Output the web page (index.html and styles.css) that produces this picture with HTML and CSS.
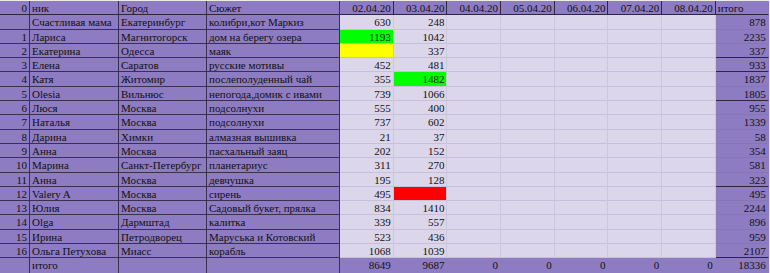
FILE: index.html
```html
<!DOCTYPE html>
<html lang="ru">
<head>
<meta charset="utf-8">
<link rel="stylesheet" href="styles.css">
</head>
<body>
<div class="sheet">
  <div class="c p r n hd">0</div><div class="c p hd">ник</div><div class="c p hd">Город</div><div class="c p hd">Сюжет</div>
  <div class="c p r hd dv">02.04.20</div><div class="c p r hd dv">03.04.20</div><div class="c p r hd dv">04.04.20</div><div class="c p r hd dv">05.04.20</div><div class="c p r hd dv">06.04.20</div><div class="c p r hd dv">07.04.20</div><div class="c p r hd dv">08.04.20</div><div class="c p hd tot">итого</div>

  <div class="c p r n"></div><div class="c p">Счастливая мама</div><div class="c p">Екатеринбург</div><div class="c p">колибри,кот Маркиз</div>
  <div class="c l r">630</div><div class="c l r">248</div><div class="c l"></div><div class="c l"></div><div class="c l"></div><div class="c l"></div><div class="c l"></div><div class="c p r tot">878</div>

  <div class="c p r n">1</div><div class="c p">Лариса</div><div class="c p">Магнитогорск</div><div class="c p">дом на берегу озера</div>
  <div class="c l r green">1193</div><div class="c l r">1042</div><div class="c l"></div><div class="c l"></div><div class="c l"></div><div class="c l"></div><div class="c l"></div><div class="c p r tot">2235</div>

  <div class="c p r n">2</div><div class="c p">Екатерина</div><div class="c p">Одесса</div><div class="c p">маяк</div>
  <div class="c l r yellow"></div><div class="c l r">337</div><div class="c l"></div><div class="c l"></div><div class="c l"></div><div class="c l"></div><div class="c l"></div><div class="c p r tot thick">337</div>

  <div class="c p r n">3</div><div class="c p">Елена</div><div class="c p">Саратов</div><div class="c p">русские мотивы</div>
  <div class="c l r">452</div><div class="c l r">481</div><div class="c l"></div><div class="c l"></div><div class="c l"></div><div class="c l"></div><div class="c l"></div><div class="c p r tot thick">933</div>

  <div class="c p r n">4</div><div class="c p">Катя</div><div class="c p">Житомир</div><div class="c p">послеполуденный чай</div>
  <div class="c l r">355</div><div class="c l r green">1482</div><div class="c l"></div><div class="c l"></div><div class="c l"></div><div class="c l"></div><div class="c l"></div><div class="c p r tot">1837</div>

  <div class="c p r n">5</div><div class="c p">Olesia</div><div class="c p">Вильнюс</div><div class="c p">непогода,домик с ивами</div>
  <div class="c l r">739</div><div class="c l r">1066</div><div class="c l"></div><div class="c l"></div><div class="c l"></div><div class="c l"></div><div class="c l"></div><div class="c p r tot thick">1805</div>

  <div class="c p r n">6</div><div class="c p">Люся</div><div class="c p">Москва</div><div class="c p">подсолнухи</div>
  <div class="c l r">555</div><div class="c l r">400</div><div class="c l"></div><div class="c l"></div><div class="c l"></div><div class="c l"></div><div class="c l"></div><div class="c p r tot">955</div>

  <div class="c p r n">7</div><div class="c p">Наталья</div><div class="c p">Москва</div><div class="c p">подсолнухи</div>
  <div class="c l r">737</div><div class="c l r">602</div><div class="c l"></div><div class="c l"></div><div class="c l"></div><div class="c l"></div><div class="c l"></div><div class="c p r tot">1339</div>

  <div class="c p r n">8</div><div class="c p">Дарина</div><div class="c p">Химки</div><div class="c p">алмазная вышивка</div>
  <div class="c l r">21</div><div class="c l r">37</div><div class="c l"></div><div class="c l"></div><div class="c l"></div><div class="c l"></div><div class="c l"></div><div class="c p r tot">58</div>

  <div class="c p r n">9</div><div class="c p">Анна</div><div class="c p">Москва</div><div class="c p">пасхальный заяц</div>
  <div class="c l r">202</div><div class="c l r">152</div><div class="c l"></div><div class="c l"></div><div class="c l"></div><div class="c l"></div><div class="c l"></div><div class="c p r tot">354</div>

  <div class="c p r n">10</div><div class="c p">Марина</div><div class="c p">Санкт-Петербург</div><div class="c p">планетариус</div>
  <div class="c l r">311</div><div class="c l r">270</div><div class="c l"></div><div class="c l"></div><div class="c l"></div><div class="c l"></div><div class="c l"></div><div class="c p r tot">581</div>

  <div class="c p r n">11</div><div class="c p">Анна</div><div class="c p">Москва</div><div class="c p">девчушка</div>
  <div class="c l r">195</div><div class="c l r">128</div><div class="c l"></div><div class="c l"></div><div class="c l"></div><div class="c l"></div><div class="c l"></div><div class="c p r tot thick">323</div>

  <div class="c p r n">12</div><div class="c p">Valery A</div><div class="c p">Москва</div><div class="c p">сирень</div>
  <div class="c l r">495</div><div class="c l r red"></div><div class="c l"></div><div class="c l"></div><div class="c l"></div><div class="c l"></div><div class="c l"></div><div class="c p r tot">495</div>

  <div class="c p r n">13</div><div class="c p">Юлия</div><div class="c p">Москва</div><div class="c p">Садовый букет, прялка</div>
  <div class="c l r">834</div><div class="c l r">1410</div><div class="c l"></div><div class="c l"></div><div class="c l"></div><div class="c l"></div><div class="c l"></div><div class="c p r tot">2244</div>

  <div class="c p r n">14</div><div class="c p">Olga</div><div class="c p">Дармштад</div><div class="c p">калитка</div>
  <div class="c l r">339</div><div class="c l r">557</div><div class="c l"></div><div class="c l"></div><div class="c l"></div><div class="c l"></div><div class="c l"></div><div class="c p r tot">896</div>

  <div class="c p r n">15</div><div class="c p">Ирина</div><div class="c p">Петродворец</div><div class="c p">Маруська и Котовский</div>
  <div class="c l r">523</div><div class="c l r">436</div><div class="c l"></div><div class="c l"></div><div class="c l"></div><div class="c l"></div><div class="c l"></div><div class="c p r tot">959</div>

  <div class="c p r n">16</div><div class="c p">Ольга Петухова</div><div class="c p">Миасс</div><div class="c p">корабль</div>
  <div class="c l r">1068</div><div class="c l r">1039</div><div class="c l"></div><div class="c l"></div><div class="c l"></div><div class="c l"></div><div class="c l"></div><div class="c p r tot thick">2107</div>

  <div class="c p r n last"></div><div class="c p last">итого</div><div class="c p last"></div><div class="c p last"></div>
  <div class="c p r last sum">8649</div><div class="c p r last sum">9687</div><div class="c p r last sum">0</div><div class="c p r last sum">0</div><div class="c p r last sum">0</div><div class="c p r last sum">0</div><div class="c p r last sum">0</div><div class="c p r last tot">18336</div>
</div>
</body>
</html>
```

FILE: styles.css
```css
html, body {
  margin: 0;
  padding: 0;
  background: #ebebeb;
}

.sheet {
  display: grid;
  grid-template-columns: 30px 89px 88px 133px repeat(7, 53.7px) 53px;
  grid-template-rows: repeat(19, 14.3px);
  margin-top: 1px;
  width: 769px;
  font-family: "Liberation Serif", "Times New Roman", serif;
  font-size: 11px;
  color: #111;
}

.c {
  box-sizing: border-box;
  padding: 0 2px;
  line-height: 14px;
  white-space: nowrap;
  overflow: hidden;
  border-bottom: 1px solid #c8c0da;
  border-right: 1px solid #cdc6dd;
}

.p {
  background: #8e7cc3;
  border-bottom: 1px solid #3a3150;
  border-right: 1px solid #3a3150;
}

.l {
  background: #dcd6ea;
}

.r {
  text-align: right;
}

.hd {
  border-bottom: 1px solid #2e2640;
}

.dv {
  border-right: 1px solid #2e2640;
}

.tot {
  border-right: 1px solid #8e7cc3;
  border-bottom: 1px solid #8576b8;
}

.tot.thick {
  border-bottom: 1px solid #2e2640;
}

.hd.tot {
  border-bottom: 1px solid #2e2640;
}

.green {
  background: #00ff00;
}

.yellow {
  background: #ffff00;
}

.red {
  background: #ff0000;
}

.sum {
  border-right: 1px solid #8e7cc3;
  border-bottom: none;
}

.last {
  border-bottom: none;
}
```
